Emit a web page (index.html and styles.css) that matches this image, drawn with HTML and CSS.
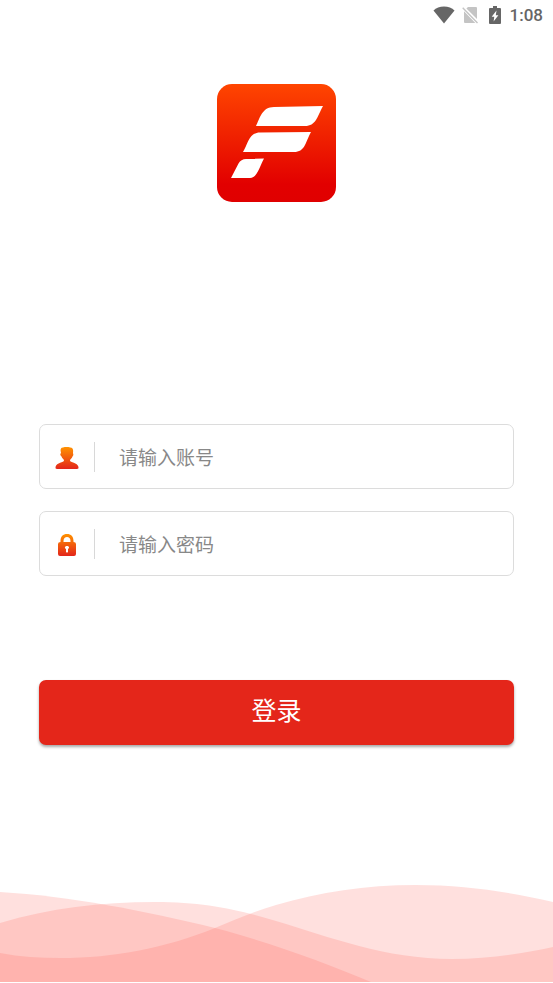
FILE: index.html
```html
<!DOCTYPE html>
<html lang="zh-CN">
<head>
<meta charset="utf-8">
<meta name="viewport" content="width=device-width, initial-scale=1">
<title>登录</title>
<link rel="stylesheet" href="styles.css">
</head>
<body>
<div class="screen">
  <header class="status">
    <svg class="status-wifi" viewBox="0 0 22 18" aria-hidden="true"><path d="M11 17.500 0.500 4.500C3 1.800 6.800.5 11 .5s8 1.300 10.500 4z"/></svg>
    <svg class="status-sim" viewBox="0 0 16 18" aria-hidden="true"><path d="M6 1h8q1 0 1 1v11L4.400 2.400zM2 5.300 13.300 17H3q-1 0-1-1z"/><path class="slash" d="M.7 1.700 15.500 17"/></svg>
    <svg class="status-battery" viewBox="0 0 12 18" aria-hidden="true"><path fill-rule="evenodd" d="M4 0h4v2h3q1 0 1 1v14q0 1-1 1H1q-1 0-1-1V3q0-1 1-1h3zM7.500 4.500 2.700 10.700h2.600L4.600 15.500 9.400 9.200H6.800z"/></svg>
    <time class="clock">1:08</time>
  </header>
  <main class="content">
    <svg class="logo" viewBox="0 0 119 118" role="img" aria-label="F">
      <defs><linearGradient id="logo-fill" x1="0" y1="0" x2="0" y2="1"><stop offset="0" stop-color="#ff4500"/><stop offset=".85" stop-color="#e20000"/><stop offset="1" stop-color="#e00000"/></linearGradient></defs>
      <rect width="119" height="118" rx="15" fill="url(#logo-fill)"/>
      <path fill="#fff" d="M39 42C43 34 45 23 57 23L106 22C100 33 99 42 88 42ZM26 68C31 60 32 48.500 43 48.500L94 48C88 59 88 68 77 68ZM14 94 21.500 79.500Q24 75 29 75L47 74.500C42 84 40 94 33 94Z"/>
    </svg>
    <form class="login">
      <div class="field">
        <label class="field-icon" for="account" aria-label="账号">
          <svg viewBox="0 0 24 24" aria-hidden="true">
            <defs><linearGradient id="icon-fill" gradientUnits="userSpaceOnUse" x1="0" y1="1" x2="0" y2="23"><stop offset="0" stop-color="#ff9200"/><stop offset="1" stop-color="#e3251b"/></linearGradient></defs>
            <path fill="url(#icon-fill)" d="M6 2.500C7 .5 16 .5 17.500 2.500 18.500 4 18 6 18 7q1 2-.5 3.500C17 12.500 15 13 15 14.500c0 2.500 7.500 1.500 8.500 6.500q.5 2-1.500 2H2q-2 0-1.500-2c1-5 8.500-4 8.500-6.500 0-1.500-2-2-2.500-4C5 9 5 8 6 7 6 6 5 4 6 2.500z"/>
          </svg>
        </label>
        <input id="account" type="text" placeholder="请输入账号">
      </div>
      <div class="field">
        <label class="field-icon" for="password" aria-label="密码">
          <svg viewBox="0 0 24 24" aria-hidden="true"><path fill="url(#icon-fill)" fill-rule="evenodd" d="M5.500 9V8C5.500 3.500 8 1 12 1s6.500 2.500 6.500 7v1q2.500 0 2.500 2v10q0 2-2 2H5q-2 0-2-2V11q0-2 2.500-2zM8.500 9h7V8c0-2.500-1.500-4-3.500-4S8.500 5.500 8.500 8zM11 16v3q1 1 2 0v-3c2-1 1-3-1-3s-3 2-1 3z"/></svg>
        </label>
        <input id="password" type="password" placeholder="请输入密码">
      </div>
      <button class="submit" type="submit">登录</button>
    </form>
  </main>
  <svg class="waves" viewBox="0 0 553 98" preserveAspectRatio="none" aria-hidden="true">
    <path d="M0 8C70 12 145 27 215 44 275 60 325 79 371 98H0Z"/>
    <path d="M0 39C50 24 100 18 155 18 205 18 235 25 276 37 330 53 385 75 452 75 490 75 525 69 553 63V98H0Z"/>
    <path d="M0 69C20 73 40 74 60 74 115 74 165 64 215 44 235 36 255 27 276 21 320 8 365 1 416 1 465 1 510 8 553 18V98H0Z"/>
  </svg>
</div>
</body>
</html>
```
FILE: styles.css
```css
* {
  box-sizing: border-box;
}

body {
  margin: 0;
  background: #fff;
  font-family: Roboto, "Noto Sans CJK SC", sans-serif;
}

.screen {
  display: flex;
  flex-direction: column;
  min-height: 100vh;
  padding-bottom: 1px;
}

.status {
  display: flex;
  align-items: center;
  justify-content: flex-end;
  height: 30px;
  padding-right: 10px;
  color: #666;
}

.status svg {
  height: 18px;
  fill: #666;
}

.status-wifi {
  width: 22px;
  margin-right: 7px;
}

.status .status-sim {
  width: 16px;
  margin-right: 11px;
  fill: #c4c4c4;
}

.slash {
  stroke: #c4c4c4;
  stroke-width: 1.4;
}

.status-battery {
  width: 12px;
  margin-right: 9px;
}

.clock {
  font-size: 17px;
  font-weight: 500;
  line-height: 30px;
}

.content {
  display: flex;
  flex: 1;
  flex-direction: column;
  align-items: center;
  padding: 54px 39px 0;
}

.logo {
  width: 119px;
  height: 118px;
}

.login {
  display: flex;
  flex-direction: column;
  width: 100%;
  margin-top: 222px;
}

.field {
  display: flex;
  align-items: center;
  height: 65px;
  border: 1px solid #dcdcdc;
  border-radius: 7px;
}

.field + .field {
  margin-top: 22px;
}

.field-icon {
  display: flex;
  align-items: center;
  width: 55px;
  height: 30px;
  padding: 2px 0 0 15px;
  border-right: 1px solid #d8d8d8;
}

.field-icon svg {
  width: 24px;
  height: 24px;
}

.field input {
  flex: 1;
  min-width: 0;
  height: 100%;
  padding: 0 24px;
  border: 0;
  outline: 0;
  background: transparent;
  color: #333;
  font-family: "Noto Sans CJK SC", sans-serif;
  font-size: 19px;
}

.field input::placeholder {
  color: #888;
  opacity: 1;
}

.submit {
  height: 65px;
  margin-top: 104px;
  padding: 0 0 8px;
  border: 0;
  border-radius: 7px;
  background: #e4261a;
  box-shadow: 0 2px 3px rgba(0, 0, 0, 0.35);
  color: #fff;
  font-family: "Noto Sans CJK SC", sans-serif;
  font-size: 25px;
}

.waves {
  display: block;
  width: 100%;
  height: 98px;
  fill: rgba(255, 100, 92, 0.2);
}
```
